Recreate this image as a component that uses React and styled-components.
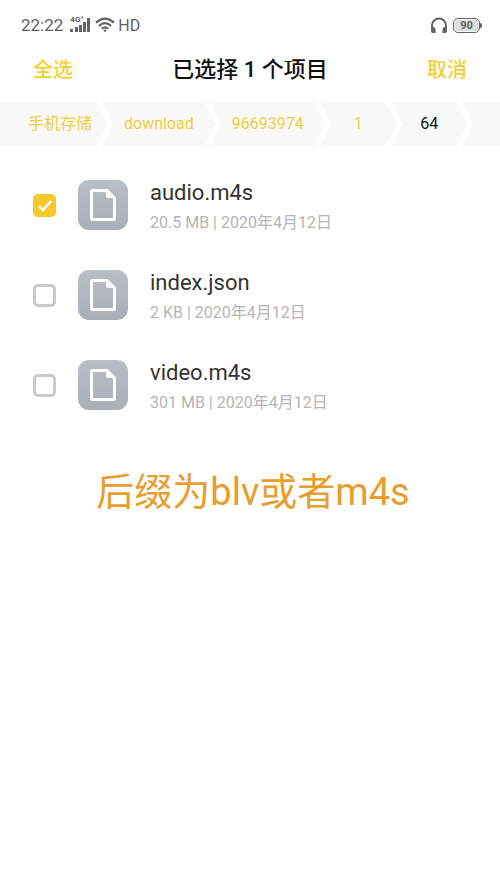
import React from "react";
import styled, { createGlobalStyle } from "styled-components";

const crumbs = ["手机存储", "download", "96693974", "1", "64"];

const files = [
  { name: "audio.m4s", size: "20.5 MB", date: "2020年4月12日", picked: true },
  { name: "index.json", size: "2 KB", date: "2020年4月12日", picked: false },
  { name: "video.m4s", size: "301 MB", date: "2020年4月12日", picked: false },
];

export default function App() {
  return (
    <>
      <GlobalStyle />
      <StatusBar />
      <Header>
        <TextButton type="button">全选</TextButton>
        <Title>已选择 1 个项目</Title>
        <TextButton type="button">取消</TextButton>
      </Header>
      <Crumbs aria-label="路径">
        {crumbs.map((c, i) => (
          <Crumb key={c}>
            <CrumbLink href="#" $current={i === crumbs.length - 1}>
              {c}
            </CrumbLink>
            <Chevron />
          </Crumb>
        ))}
      </Crumbs>
      <FileList>
        {files.map((f) => (
          <FileRow key={f.name} file={f} />
        ))}
      </FileList>
      <Note>后缀为blv或者m4s</Note>
    </>
  );
}

function StatusBar() {
  return (
    <Status>
      <StatusGroup>
        <Clock>22:22</Clock>
        <Signal>
          <Network>4G⁺</Network>
          <SignalIcon />
        </Signal>
        <WifiIcon />
        <Hd>HD</Hd>
      </StatusGroup>
      <StatusGroup>
        <HeadphoneIcon />
        <Battery>
          <Charge>90</Charge>
        </Battery>
      </StatusGroup>
    </Status>
  );
}

function FileRow({ file }) {
  const [checked, setChecked] = React.useState(file.picked);

  return (
    <Row>
      <Label>
        <Check
          type="checkbox"
          checked={checked}
          onChange={(e) => setChecked(e.target.checked)}
        />
        <FileBadge>
          <FileIcon />
        </FileBadge>
        <Info>
          <FileName>{file.name}</FileName>
          <Meta>
            {file.size} | {file.date}
          </Meta>
        </Info>
      </Label>
    </Row>
  );
}

//ICONS

function SignalIcon() {
  return (
    <svg width="20" height="15" viewBox="0 0 20 15" fill="#626262" aria-hidden="true">
      <rect x="0" y="11" width="3" height="3" />
      <rect x="5" y="9" width="3" height="5" />
      <rect x="9" y="7" width="3" height="7" />
      <rect x="13" y="4" width="3" height="10" />
      <rect x="17" y="0" width="3" height="14" />
    </svg>
  );
}

function WifiIcon() {
  return (
    <svg width="20" height="16" viewBox="0 0 20 16" aria-hidden="true">
      <g fill="none" stroke="#626262" strokeWidth="2.2">
        <path d="M1 5.6 Q10 -2.4 19 5.6" />
        <path d="M4 8.9 Q10 3.3 16 8.9" />
        <path d="M6.8 11.8 Q10 8.8 13.2 11.8" />
      </g>
      <path d="M8.2 13.2 Q10 12 11.8 13.2 L10 15.2 Z" fill="#626262" />
    </svg>
  );
}

function HeadphoneIcon() {
  return (
    <svg width="18" height="17" viewBox="0 0 18 17" aria-hidden="true">
      <path
        d="M2 13 V8.5 A7 7 0 0 1 16 8.5 V13"
        fill="none"
        stroke="#626262"
        strokeWidth="2"
      />
      <path
        d="M1 10 H4 Q5.5 10.5 5.5 12.5 V16 H3 Q1 16 1 14 Z M17 10 H14 Q12.5 10.5 12.5 12.5 V16 H15 Q17 16 17 14 Z"
        fill="#626262"
      />
    </svg>
  );
}

function Chevron() {
  return (
    <svg width="16" height="44" viewBox="0 0 16 44" aria-hidden="true">
      <path d="M0 0 H5 L16 22 L5 44 H0 L11 22 Z" fill="#fff" />
    </svg>
  );
}

function FileIcon() {
  return (
    <svg width="26" height="32" viewBox="0 0 26 32" aria-hidden="true">
      <path
        d="M3 1.5 H17 L24.5 9 V29.5 Q24.5 30.5 23.5 30.5 H2.5 Q1.5 30.5 1.5 29.5 V2.5 Q1.5 1.5 3 1.5 Z"
        fill="none"
        stroke="#fff"
        strokeWidth="3"
      />
      <path d="M16 1 V7 Q16 9 18 9 H25 L17 1 Z" fill="#fff" />
    </svg>
  );
}

//STYLES

const GlobalStyle = createGlobalStyle`
  * {
    box-sizing: border-box;
  }
  body {
    margin: 0;
    background: #fff;
    font-family: Roboto, "Noto Sans CJK SC", sans-serif;
  }
`;

const Status = styled.div`
  display: flex;
  justify-content: space-between;
  align-items: center;
  height: 48px;
  padding: 2px 20px 0 21px;
  color: #626262;
`;

const StatusGroup = styled.div`
  display: flex;
  align-items: center;
  gap: 5px;
`;

const Clock = styled.span`
  font-size: 17px;
  margin-right: 2px;
`;

const Signal = styled.span`
  position: relative;
  display: flex;
`;

const Network = styled.span`
  position: absolute;
  top: -2px;
  left: 0;
  font-size: 8px;
  font-weight: 700;
  line-height: 8px;
`;

const Hd = styled.span`
  font-size: 16px;
  margin-left: -2px;
`;

const Battery = styled.div`
  position: relative;
  width: 27px;
  height: 15px;
  padding: 1px;
  border: 1px solid #626262;
  border-radius: 5px;
  &::after {
    content: "";
    position: absolute;
    top: 4px;
    right: -3px;
    width: 2px;
    height: 5px;
    border-radius: 0 2px 2px 0;
    background: #626262;
  }
`;

const Charge = styled.div`
  height: 11px;
  border-radius: 3px;
  background: #dcdcdc;
  font-size: 11px;
  font-weight: 700;
  line-height: 11px;
  text-align: center;
`;

const Header = styled.header`
  display: flex;
  justify-content: space-between;
  align-items: center;
  height: 44px;
  margin-bottom: 10px;
  padding: 0 33px;
`;

const TextButton = styled.button`
  padding: 0;
  border: none;
  background: none;
  color: #f2cf35;
  font-family: inherit;
  font-size: 20px;
  font-weight: 500;
  line-height: 28px;
  cursor: pointer;
`;

const Title = styled.h1`
  margin: 0;
  color: #111;
  font-size: 22px;
  font-weight: 500;
  line-height: 28px;
`;

const Crumbs = styled.nav`
  display: flex;
  height: 44px;
  background: #f9f9f9;
  overflow: hidden;
`;

const Crumb = styled.div`
  display: flex;
  flex-shrink: 0;
`;

const CrumbLink = styled.a`
  min-width: 55px;
  padding: 0 11px;
  color: ${(props) => (props.$current ? "#111" : "#ecd03f")};
  font-size: 16px;
  line-height: 44px;
  text-align: center;
  text-decoration: none;
  ${Crumb}:first-child & {
    padding: 0 5px 0 28px;
  }
`;

const FileList = styled.ul`
  margin: 0;
  padding: 14px 0 0;
  list-style: none;
`;

const Row = styled.li`
  height: 90px;
`;

const Label = styled.label`
  display: flex;
  align-items: center;
  height: 100%;
  padding: 0 33px;
  cursor: pointer;
`;

const Check = styled.input`
  appearance: none;
  flex-shrink: 0;
  width: 23px;
  height: 23px;
  margin: 0 22px 0 0;
  border: 3px solid #c9c9c9;
  border-radius: 5px;
  background: #fff;
  &:checked {
    border: none;
    background: #f7c928
      url("data:image/svg+xml,%3Csvg xmlns='http://www.w3.org/2000/svg' viewBox='0 0 23 23'%3E%3Cpath d='M6 12l4 4 8-9' fill='none' stroke='%23fff' stroke-width='2.6'/%3E%3C/svg%3E");
  }
`;

const FileBadge = styled.span`
  display: flex;
  flex-shrink: 0;
  justify-content: center;
  align-items: center;
  width: 50px;
  height: 50px;
  margin-right: 22px;
  border-radius: 11px;
  background: linear-gradient(#b9bec6, #a9aeb8);
`;

const Info = styled.span`
  display: flex;
  flex-direction: column;
  padding-top: 4px;
`;

const FileName = styled.span`
  color: #333;
  font-size: 22px;
  line-height: 32px;
`;

const Meta = styled.span`
  color: #b5b5b5;
  font-size: 16px;
  line-height: 28px;
`;

const Note = styled.p`
  margin: 34px 0 0;
  padding-left: 6px;
  color: #e99d2c;
  font-size: 38px;
  line-height: 56px;
  text-align: center;
`;
